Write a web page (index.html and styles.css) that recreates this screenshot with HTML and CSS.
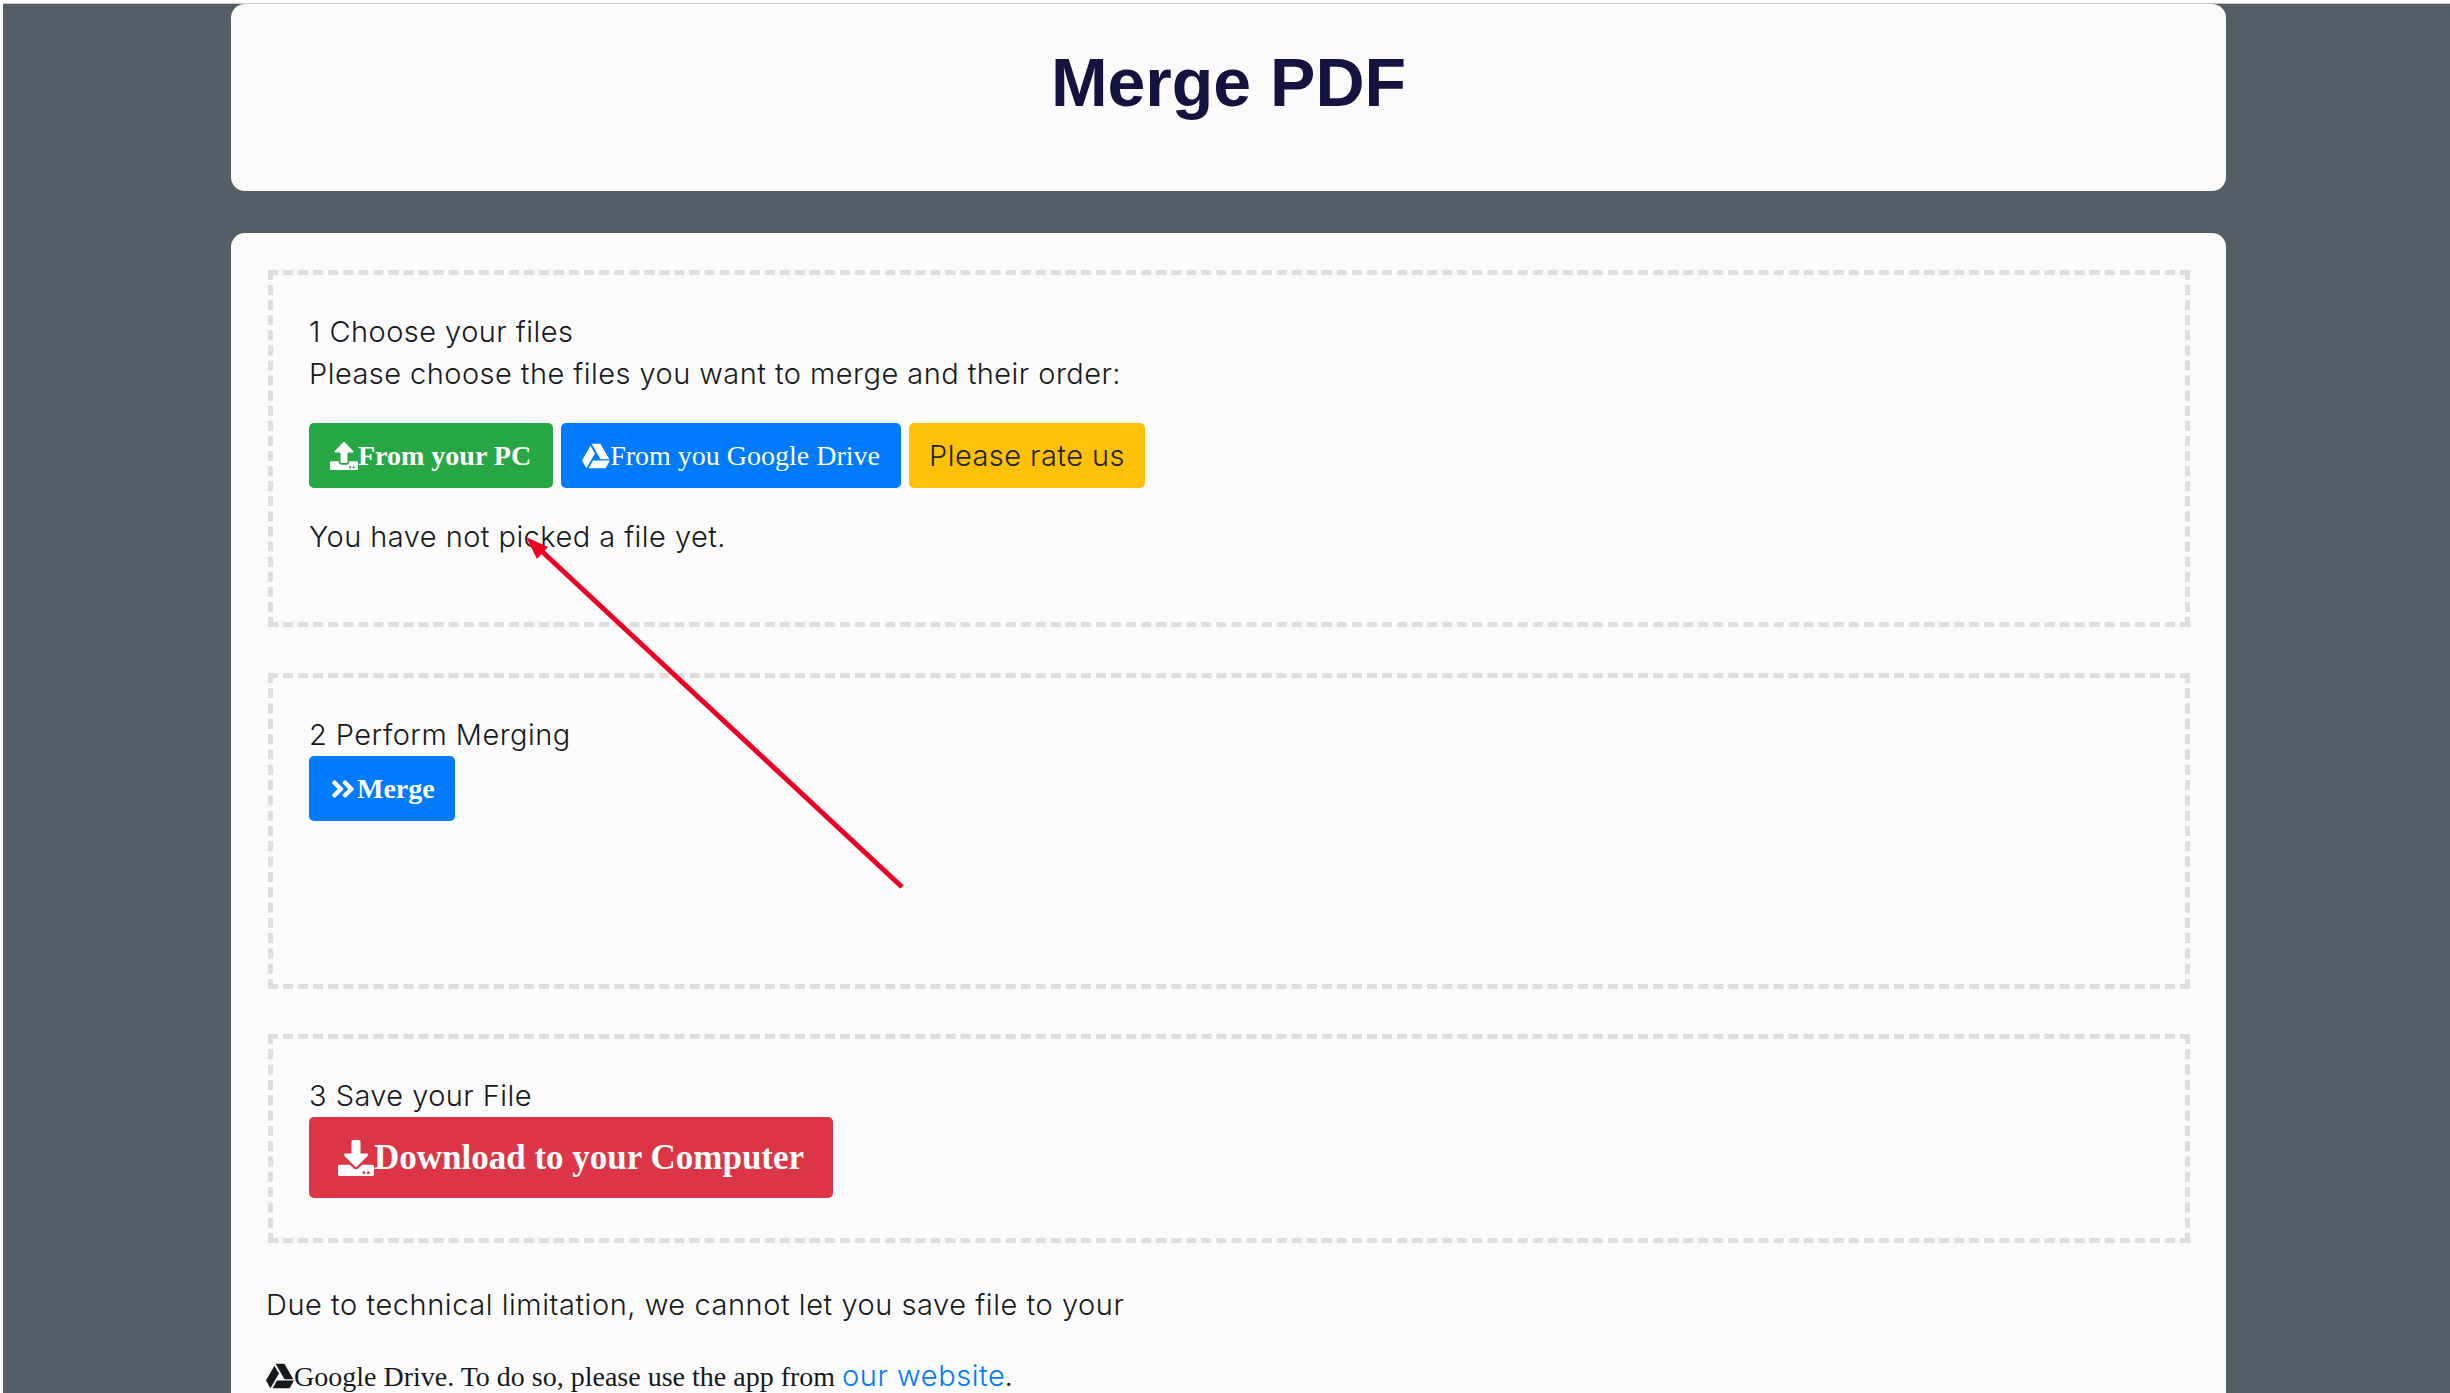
FILE: index.html
```html
<!DOCTYPE html>
<html lang="en">
<head>
    <meta charset="UTF-8">
    <meta name="viewport" content="width=device-width, initial-scale=1.0">
    <title>Merge PDF</title>
    <link rel="stylesheet" href="styles.css">
</head>
<body>
    <div class="page">
        <header class="card title-card">
            <h1>Merge PDF</h1>
        </header>
        <main class="card main-card">
            <section class="step step-choose">
                <div class="step-title">1 Choose your files</div>
                <div class="step-title">Please choose the files you want to merge and their order:</div>
                <div class="btn-row">
                    <button class="btn btn-green">
                        <svg class="icon" viewBox="0 0 512 512"><path d="M296 384h-80c-13.3 0-24-10.7-24-24V192h-87.7c-17.8 0-26.7-21.5-14.1-34.1L242.3 5.7c7.5-7.5 19.8-7.5 27.3 0l152.2 152.2c12.6 12.6 3.7 34.1-14.1 34.1H320v168c0 13.3-10.7 24-24 24zm216-8v112c0 13.3-10.7 24-24 24H24c-13.3 0-24-10.7-24-24V376c0-13.3 10.7-24 24-24h136v8c0 30.9 25.1 56 56 56h80c30.9 0 56-25.1 56-56v-8h136c13.3 0 24 10.7 24 24zm-124 88c0-11-9-20-20-20s-20 9-20 20 9 20 20 20 20-9 20-20zm64 0c0-11-9-20-20-20s-20 9-20 20 9 20 20 20 20-9 20-20z"/></svg>From your PC
                    </button>
                    <button class="btn btn-blue btn-regular">
                        <svg class="icon" viewBox="0 0 512 512"><path d="M339 314.9L175.4 32h161.2l163.6 282.9H339zm-137.5 23.6L120.9 480h310.5L512 338.5H201.5zM154.1 67.4L0 338.5 80.6 480 237 208.8 154.1 67.4z"/></svg>From you Google Drive
                    </button>
                    <button class="btn btn-yellow">Please rate us</button>
                </div>
                <p class="status">You have not picked a file yet.</p>
            </section>
            <section class="step step-merge">
                <div class="step-title">2 Perform Merging</div>
                <button class="btn btn-blue btn-merge">
                    <svg class="icon" viewBox="0 0 448 512"><path d="M224.3 273l-136 136c-9.4 9.4-24.6 9.4-33.9 0l-22.6-22.6c-9.4-9.4-9.4-24.6 0-33.9l96.4-96.4-96.4-96.4c-9.4-9.4-9.4-24.6 0-33.9L54.3 103c9.4-9.4 24.6-9.4 33.9 0l136 136c9.5 9.4 9.5 24.6.1 34zm192-34l-136-136c-9.4-9.4-24.6-9.4-33.9 0l-22.6 22.6c-9.4 9.4-9.4 24.6 0 33.9l96.4 96.4-96.4 96.4c-9.4 9.4-9.4 24.6 0 33.9l22.6 22.6c9.4 9.4 24.6 9.4 33.9 0l136-136c9.4-9.2 9.4-24.4 0-33.8z"/></svg>Merge
                </button>
            </section>
            <section class="step step-save">
                <div class="step-title">3 Save your File</div>
                <button class="btn btn-red btn-large">
                    <svg class="icon" viewBox="0 0 512 512"><path d="M216 0h80c13.3 0 24 10.7 24 24v168h87.7c17.8 0 26.7 21.5 14.1 34.1L269.7 378.3c-7.5 7.5-19.8 7.5-27.3 0L90.1 226.1c-12.6-12.6-3.7-34.1 14.1-34.1H192V24c0-13.3 10.7-24 24-24zm296 376v112c0 13.3-10.7 24-24 24H24c-13.3 0-24-10.7-24-24V376c0-13.3 10.7-24 24-24h146.7l49 49c20.1 20.1 52.5 20.1 72.6 0l49-49H488c13.3 0 24 10.7 24 24zm-124 88c0-11-9-20-20-20s-20 9-20 20 9 20 20 20 20-9 20-20zm64 0c0-11-9-20-20-20s-20 9-20 20 9 20 20 20 20-9 20-20z"/></svg>Download to your Computer
                </button>
            </section>
            <p class="note">Due to technical limitation, we cannot let you save file to your</p>
            <p class="note-serif">
                <svg class="icon" viewBox="0 0 512 512"><path d="M339 314.9L175.4 32h161.2l163.6 282.9H339zm-137.5 23.6L120.9 480h310.5L512 338.5H201.5zM154.1 67.4L0 338.5 80.6 480 237 208.8 154.1 67.4z"/></svg>Google Drive. To do so, please use the app from <a href="#">our website</a>.
            </p>
        </main>
        <svg class="arrow" viewBox="0 0 1000 700" width="1000" height="700">
            <line x1="399" y1="385" x2="31" y2="42" stroke="#ee0022" stroke-width="5"/>
            <polygon points="23,35 45,45 34,57" fill="#ee0022"/>
        </svg>
    </div>
</body>
</html>
```

FILE: styles.css
```css
html, body {
    height: 100%;
    overflow: hidden;
}
body {
    margin: 0;
    padding: 3px 0 0 3px;
    box-sizing: border-box;
    background-color: #fff;
    font-family: "Inter", sans-serif;
    color: #16191c;
}
.page {
    position: relative;
    height: 100%;
    padding: 0 224px 0 228px;
    background-color: #555d66;
    border-top: 1px solid #c8c8c8;
}
.card {
    background-color: #fbfbfc;
    border-radius: 14px;
}
.title-card {
    height: 187px;
    margin-bottom: 42px;
    text-align: center;
}
.title-card h1 {
    margin: 0;
    padding-top: 38px;
    font-family: "Liberation Sans", sans-serif;
    font-size: 68px;
    line-height: 80px;
    color: #14123e;
}
.main-card {
    height: 1300px;
    padding: 37px 36px 0 35px;
}
.step {
    box-sizing: border-box;
    margin-left: 2px;
    padding: 36px 36px 0;
    border: 5px dashed #dedede;
    font-size: 29px;
    font-weight: 300;
    letter-spacing: 0.45px;
}
.step-choose {
    height: 357px;
    margin-bottom: 46px;
}
.step-merge {
    height: 316px;
    margin-bottom: 45px;
}
.step-save {
    height: 209px;
    margin-bottom: 41px;
}
.step-title {
    line-height: 42px;
}
.btn-row {
    display: flex;
    gap: 8px;
    margin-top: 28px;
}
.btn {
    display: flex;
    align-items: center;
    height: 65px;
    padding: 0 21px;
    border: none;
    border-radius: 5px;
    color: #fff;
    font-family: "Liberation Serif", serif;
    font-size: 28px;
    font-weight: 700;
    letter-spacing: 0;
}
.btn-regular {
    font-weight: 400;
}
.btn-merge {
    padding: 0 20px;
}
.icon {
    width: 28px;
    height: 28px;
    fill: currentColor;
}
.btn-green {
    padding: 0 22px 0 21px;
    background-color: #28a745;
}
.btn-blue {
    background-color: #007bff;
}
.btn-yellow {
    padding: 0 20px;
    background-color: #ffc107;
    color: #212529;
    font-family: "Inter", sans-serif;
    font-size: 29px;
    font-weight: 300;
    letter-spacing: 0.45px;
}
.btn-red {
    background-color: #dc3545;
}
.btn-large {
    height: 81px;
    padding: 0 29px;
    font-size: 35px;
}
.btn-large .icon {
    width: 36px;
    height: 36px;
}
.status {
    margin: 28px 0 0;
    line-height: 42px;
}
.note {
    margin: 0 0 29px;
    font-size: 29px;
    font-weight: 300;
    letter-spacing: 0.55px;
    line-height: 42px;
}
.note-serif {
    margin: 0;
    font-family: "Liberation Serif", serif;
    font-size: 28px;
    line-height: 42px;
}
.note-serif .icon {
    vertical-align: -4px;
}
.note-serif a {
    font-family: "Inter", sans-serif;
    font-size: 29px;
    font-weight: 300;
    letter-spacing: 0.55px;
    color: #007bff;
    text-decoration: none;
}
/* annotation drawn over the page */
.arrow {
    position: absolute;
    left: 500px;
    top: 498px;
}
```
